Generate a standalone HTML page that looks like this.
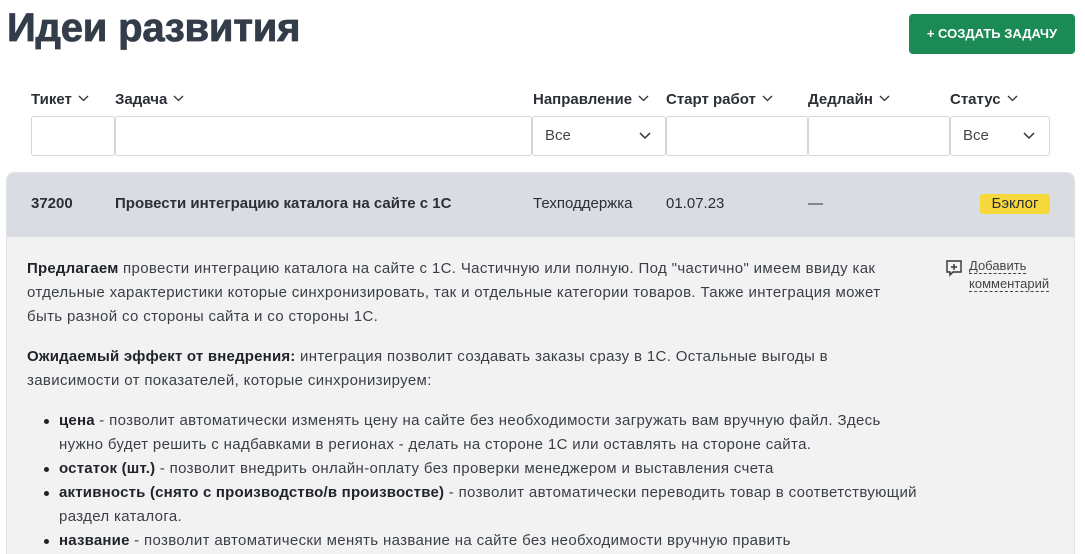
<!DOCTYPE html>
<html style="height:554px;overflow:hidden"><head><meta charset="utf-8"><style>
*{box-sizing:border-box;margin:0;padding:0}
body{width:1085px;height:554px;overflow:hidden;background:#fff;font-family:"Liberation Sans",sans-serif;color:#2b2f36;position:relative}
h1{position:absolute;left:7px;top:6px;font-size:40px;font-weight:900;color:#333d4a;letter-spacing:-0.2px;-webkit-text-stroke:0.8px #333d4a}
.btn{position:absolute;left:909px;top:14px;width:166px;height:40px;background:#1b8a55;border-radius:4px;color:#fff;font-weight:bold;font-size:13px;text-align:center;line-height:40px}
.lbl{position:absolute;top:91px;font-size:15px;font-weight:bold;color:#2b2f36}
.lbl svg{margin-left:6px;vertical-align:2px}
.in{position:absolute;top:116px;height:40px;border:1px solid #d3d6da;border-radius:3px;background:#fff;font-size:15px;color:#444;line-height:38px;padding-left:12px}
.in svg{position:absolute;right:14px;top:15px}
.panel{position:absolute;left:6px;top:172px;width:1069px;height:382px;border:1px solid #e0e2e5;border-bottom:none;border-radius:8px 8px 0 0;background:#f2f2f3;overflow:hidden}
.hd{position:absolute;left:0;top:0;width:100%;height:64px;background:#d9dce0}
.c{position:absolute;top:22px;font-size:15px}
.badge{position:absolute;left:973px;top:21px;width:70px;height:20px;background:#f6d83a;border-radius:3px;font-size:15px;text-align:center;line-height:20px}
.body{position:absolute;left:20px;top:84px;font-size:15px;line-height:24px;color:#3a3f47;white-space:nowrap;letter-spacing:0.35px}
.body b{color:#1f2329;letter-spacing:0.2px}
ul{list-style:none;margin-top:16px}
li{position:relative;padding-left:32px}
li:before{content:"";position:absolute;left:17px;top:10px;width:5px;height:5px;border-radius:50%;background:#222}
.cm{position:absolute;left:938px;top:84px;font-size:13px;line-height:18px;color:#444}
.cm span{border-bottom:1px dashed #444}
</style></head><body>
<h1>Идеи развития</h1>
<div class="btn">+ СОЗДАТЬ ЗАДАЧУ</div>
<div class="lbl" style="left:31px">Тикет<svg width="11" height="7"><path d="M1 1l4.5 4.5L10 1" fill="none" stroke="#333" stroke-width="1.3"/></svg></div>
<div class="lbl" style="left:115px">Задача<svg width="11" height="7"><path d="M1 1l4.5 4.5L10 1" fill="none" stroke="#333" stroke-width="1.3"/></svg></div>
<div class="lbl" style="left:533px">Направление<svg width="11" height="7"><path d="M1 1l4.5 4.5L10 1" fill="none" stroke="#333" stroke-width="1.3"/></svg></div>
<div class="lbl" style="left:666px">Старт работ<svg width="11" height="7"><path d="M1 1l4.5 4.5L10 1" fill="none" stroke="#333" stroke-width="1.3"/></svg></div>
<div class="lbl" style="left:808px">Дедлайн<svg width="11" height="7"><path d="M1 1l4.5 4.5L10 1" fill="none" stroke="#333" stroke-width="1.3"/></svg></div>
<div class="lbl" style="left:950px">Статус<svg width="11" height="7"><path d="M1 1l4.5 4.5L10 1" fill="none" stroke="#333" stroke-width="1.3"/></svg></div>
<div class="in" style="left:31px;width:84px"></div>
<div class="in" style="left:115px;width:417px"></div>
<div class="in" style="left:532px;width:134px">Все<svg width="12" height="8"><path d="M1 1l5 5 5-5" fill="none" stroke="#333" stroke-width="1.5"/></svg></div>
<div class="in" style="left:666px;width:142px"></div>
<div class="in" style="left:808px;width:142px"></div>
<div class="in" style="left:950px;width:100px">Все<svg width="12" height="8"><path d="M1 1l5 5 5-5" fill="none" stroke="#333" stroke-width="1.5"/></svg></div>
<div class="panel">
<div class="hd">
<div class="c" style="left:24px;font-weight:bold">37200</div>
<div class="c" style="left:108px;font-weight:bold">Провести интеграцию каталога на сайте с 1С</div>
<div class="c" style="left:526px">Техподдержка</div>
<div class="c" style="left:659px">01.07.23</div>
<div class="c" style="left:801px">—</div>
<div class="badge">Бэклог</div>
</div>
<div class="body">
<div><b>Предлагаем</b> провести интеграцию каталога на сайте с 1С. Частичную или полную. Под "частично" имеем ввиду как</div>
<div>отдельные характеристики которые синхронизировать, так и отдельные категории товаров. Также интеграция может</div>
<div>быть разной со стороны сайта и со стороны 1С.</div>
<div style="margin-top:16px"><b>Ожидаемый эффект от внедрения:</b> интеграция позволит создавать заказы сразу в 1С. Остальные выгоды в</div>
<div>зависимости от показателей, которые синхронизируем:</div>
<ul>
<li><b>цена</b> - позволит автоматически изменять цену на сайте без необходимости загружать вам вручную файл. Здесь<br>нужно будет решить с надбавками в регионах - делать на стороне 1С или оставлять на стороне сайта.</li>
<li><b>остаток (шт.)</b> - позволит внедрить онлайн-оплату без проверки менеджером и выставления счета</li>
<li><b>активность (снято с производство/в произвостве)</b> - позволит автоматически переводить товар в соответствующий<br>раздел каталога.</li>
<li><b>название</b> - позволит автоматически менять название на сайте без необходимости вручную править</li>
</ul>
</div>
<div class="cm"><svg width="18" height="18" style="position:absolute;left:0;top:2px"><path d="M2 2h14v11H8l-3 3v-3H2z" fill="none" stroke="#333" stroke-width="1.4"/><path d="M9 5v6M6 8h6" stroke="#333" stroke-width="1.4"/></svg><div style="margin-left:24px"><span>Добавить</span><br><span>комментарий</span></div></div>
</div>
</body></html>
